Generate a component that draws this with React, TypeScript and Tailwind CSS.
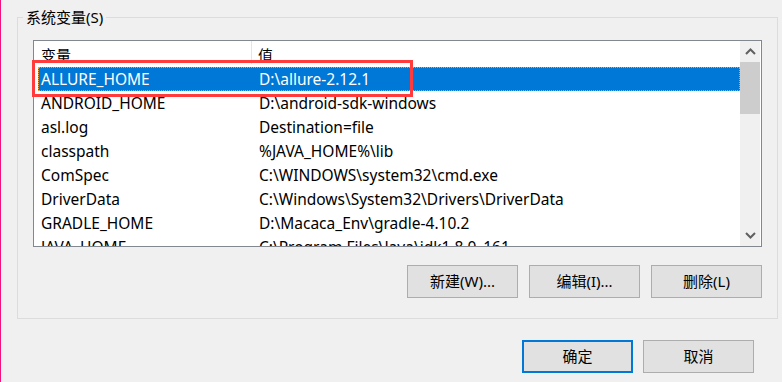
import React from "react";

const rows: [string, string][] = [
  ["ALLURE_HOME", "D:\\allure-2.12.1"],
  ["ANDROID_HOME", "D:\\android-sdk-windows"],
  ["asl.log", "Destination=file"],
  ["classpath", "%JAVA_HOME%\\lib"],
  ["ComSpec", "C:\\WINDOWS\\system32\\cmd.exe"],
  ["DriverData", "C:\\Windows\\System32\\Drivers\\DriverData"],
  ["GRADLE_HOME", "D:\\Macaca_Env\\gradle-4.10.2"],
  ["JAVA_HOME", "C:\\Program Files\\Java\\jdk1.8.0_161"],
];

const font = "[font-family:'Noto_Sans','Noto_Sans_CJK_SC',sans-serif]";

function Btn({ label, primary }: { label: string; primary?: boolean }) {
  return (
    <div
      className={
        "w-[111px] h-[33px] flex items-center justify-center bg-[#e1e1e1] text-[15px] text-black " +
        (primary ? "border-2 border-[#0078d7]" : "border border-[#adadad]")
      }
    >
      {label}
    </div>
  );
}

export default function App() {
  return (
    <div
      className={
        "w-[782px] h-[382px] bg-[#f0f0f0] border-l border-[#f0137d] overflow-hidden flex flex-col " +
        font
      }
    >
      {/* group box */}
      <div className="relative ml-[16px] mt-[17px] w-[761px] h-[302px] border border-[#dcdcdc] flex flex-col">
        <div className="absolute left-[5px] top-[-10px] px-[3px] bg-[#f0f0f0] text-[15px] leading-[18px] text-black">
          系统变量(S)
        </div>
        <div className="ml-[15px] mt-[22px] w-[729px] h-[207px] border border-[#828790] bg-white flex">
          <div className="flex-1 overflow-hidden flex flex-col">
            {/* header */}
            <div className="h-[26px] flex text-[15px] shrink-0">
              <div className="w-[218px] pl-[7px] pt-[3px] border-r border-[#e5e5e5] h-[23px]">变量</div>
              <div className="pl-[6px] pt-[3px]">值</div>
            </div>
            {rows.map(([k, v], i) => (
              <div key={k} className="h-[24px] shrink-0 flex text-[15.5px] leading-[24px]">
                {i === 0 ? (
                  <div className="ml-[4px] flex-1 flex bg-[#0078d7] text-white border border-dotted border-[#f0a040]">
                    <div className="w-[220px] pl-[2px] leading-[22px]">{k}</div>
                    <div className="leading-[22px]">{v}</div>
                  </div>
                ) : (
                  <div className="flex">
                    <div className="w-[218px] pl-[7px]">{k}</div>
                    <div className="pl-[7px] whitespace-nowrap">{v}</div>
                  </div>
                )}
              </div>
            ))}
          </div>
          {/* scrollbar */}
          <div className="w-[20px] mr-[1px] bg-[#f0f0f0] flex flex-col">
            <div className="h-[21px] flex items-center justify-center">
              <svg width="11" height="7" viewBox="0 0 11 7">
                <path d="M1 6 L5.5 1.5 L10 6" stroke="#606060" strokeWidth="2" fill="none" />
              </svg>
            </div>
            <div className="h-[52px] bg-[#cdcdcd]" />
            <div className="flex-1" />
            <div className="h-[21px] flex items-center justify-center">
              <svg width="11" height="7" viewBox="0 0 11 7">
                <path d="M1 1 L5.5 5.5 L10 1" stroke="#606060" strokeWidth="2" fill="none" />
              </svg>
            </div>
          </div>
        </div>
        <div className="mt-[18px] mr-[15px] flex justify-end gap-[11px]">
          <Btn label="新建(W)..." />
          <Btn label="编辑(I)..." />
          <Btn label="删除(L)" />
        </div>
        {/* red highlight box */}
        <div className="absolute left-[14px] top-[42px] w-[381px] h-[37px] border-[3px] border-[#ff3b3b]" />
      </div>
      <div className="mt-[21px] mr-[28px] flex justify-end gap-[10px]">
        <Btn label="确定" primary />
        <Btn label="取消" />
      </div>
    </div>
  );
}
